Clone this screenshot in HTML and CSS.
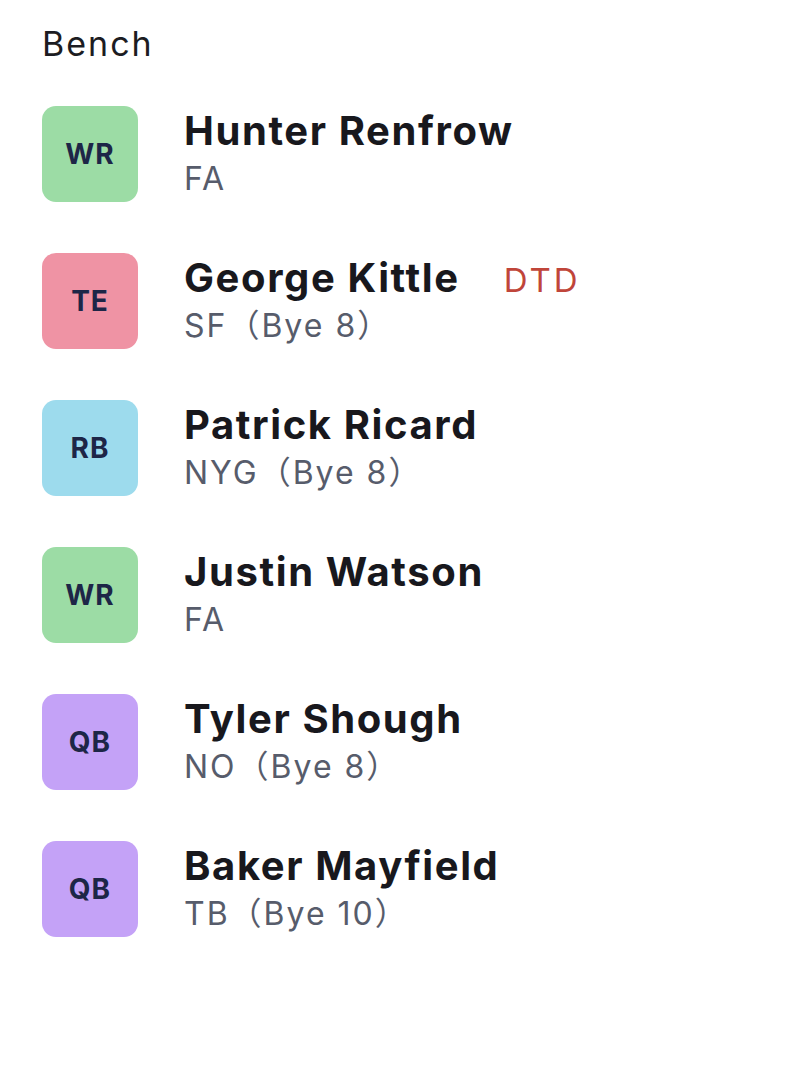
FILE: index.html
```html
<!DOCTYPE html>
<html>
<head>
    <title>Bench</title>
    <link rel="stylesheet" href="styles.css">
</head>
<body>
    <div class="bench">
        <h2 class="bench-title">Bench</h2>

        <ul class="player-list">
            <li class="player">
                <div class="pos pos-wr">WR</div>
                <div class="info">
                    <div class="name-line"><span class="name">Hunter Renfrow</span></div>
                    <div class="team">FA</div>
                </div>
            </li>
            <li class="player">
                <div class="pos pos-te">TE</div>
                <div class="info">
                    <div class="name-line"><span class="name">George Kittle</span><span class="status">DTD</span></div>
                    <div class="team">SF（Bye 8）</div>
                </div>
            </li>
            <li class="player">
                <div class="pos pos-rb">RB</div>
                <div class="info">
                    <div class="name-line"><span class="name">Patrick Ricard</span></div>
                    <div class="team">NYG（Bye 8）</div>
                </div>
            </li>
            <li class="player">
                <div class="pos pos-wr">WR</div>
                <div class="info">
                    <div class="name-line"><span class="name">Justin Watson</span></div>
                    <div class="team">FA</div>
                </div>
            </li>
            <li class="player">
                <div class="pos pos-qb">QB</div>
                <div class="info">
                    <div class="name-line"><span class="name">Tyler Shough</span></div>
                    <div class="team">NO（Bye 8）</div>
                </div>
            </li>
            <li class="player">
                <div class="pos pos-qb">QB</div>
                <div class="info">
                    <div class="name-line"><span class="name">Baker Mayfield</span></div>
                    <div class="team">TB（Bye 10）</div>
                </div>
            </li>
        </ul>
    </div>
</body>
</html>
```

FILE: styles.css
```css
body {
    margin: 0;
    background: #ffffff;
    font-family: Inter, "Noto Sans", "Noto Sans CJK SC", sans-serif;
}

.bench {
    padding: 22px 42px;
}

.bench-title {
    margin: 0;
    font-size: 34px;
    font-weight: 400;
    letter-spacing: 2px;
    line-height: 44px;
    color: #1c1c22;
}

.player-list {
    list-style: none;
    margin: 40px 0 0 0;
    padding: 0;
    display: flex;
    flex-direction: column;
    gap: 51px;
}

.player {
    display: flex;
    align-items: flex-start;
    gap: 46px;
}

.pos {
    width: 96px;
    height: 96px;
    border-radius: 14px;
    display: flex;
    align-items: center;
    justify-content: center;
    font-size: 28px;
    font-weight: 700;
    letter-spacing: 1px;
    color: #1d2647;
    flex-shrink: 0;
}

.pos-wr { background: #9cdca5; }
.pos-te { background: #ef93a4; }
.pos-rb { background: #9ddbed; }
.pos-qb { background: #c4a2f7; }

.info {
    display: flex;
    flex-direction: column;
}

.name-line {
    height: 44px;
    display: flex;
    align-items: baseline;
    gap: 44px;
}

.name {
    font-size: 40px;
    font-weight: 700;
    letter-spacing: 1.6px;
    line-height: 50px;
    color: #18181d;
}

.status {
    font-size: 33px;
    font-weight: 400;
    letter-spacing: 3px;
    line-height: 50px;
    color: #c0453a;
}

.team {
    margin-top: 9px;
    font-size: 32px;
    letter-spacing: 2px;
    line-height: 40px;
    color: #575c6b;
}
```
